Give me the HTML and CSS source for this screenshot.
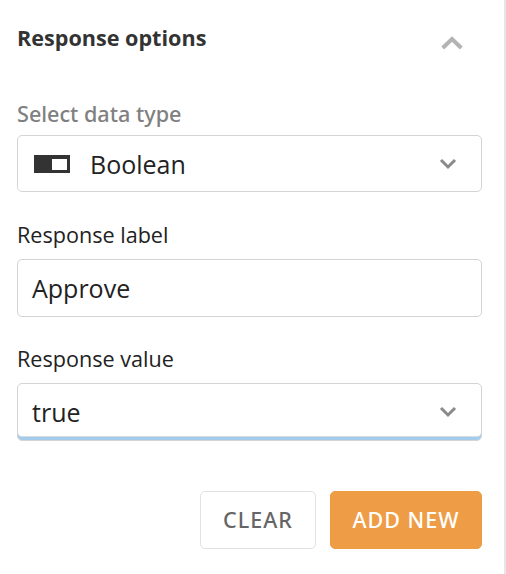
FILE: index.html
```html
<!DOCTYPE html>
<html lang="en">
<head>
<meta charset="utf-8">
<title>Response options</title>
<link rel="stylesheet" href="styles.css">
</head>
<body>
<main class="panel">
  <header class="panel-head">
    <h1 class="title">Response options</h1>
    <svg class="collapse" width="22" height="14" viewBox="0 0 22 14"><path d="M1.7 12 11 3l9.3 9" fill="none" stroke="#b3b3b3" stroke-width="4"/></svg>
  </header>
  <label class="label label-muted">Select data type</label>
  <div class="field">
    <svg class="toggle" width="36" height="18" viewBox="0 0 36 18"><path fill="#333" fill-rule="evenodd" d="M0 0h36v18H0zM18 4v11h15V4z"/></svg>
    <span class="value">Boolean</span>
    <svg class="chevron" width="18" height="12" viewBox="0 0 18 12"><path d="m2 2 7 7 7-7" fill="none" stroke="#8a8a8a" stroke-width="3"/></svg>
  </div>
  <label class="label">Response label</label>
  <div class="field field-input"><span class="value">Approve</span></div>
  <label class="label">Response value</label>
  <div class="field field-active">
    <span class="value">true</span>
    <svg class="chevron" width="18" height="12" viewBox="0 0 18 12"><path d="m2 2 7 7 7-7" fill="none" stroke="#8a8a8a" stroke-width="3"/></svg>
  </div>
  <footer class="actions">
    <button class="btn btn-clear">CLEAR</button>
    <button class="btn btn-add">ADD NEW</button>
  </footer>
</main>
</body>
</html>
```
FILE: styles.css
```css
* { box-sizing: border-box; }
body { margin: 0; background: #fff; font-family: "Open Sans", sans-serif; color: #222; }
.panel { width: 506px; height: 574px; padding: 22px 22px 0 17px; border-right: 2px solid #e6e6e6; overflow: hidden; }
.panel-head { display: flex; justify-content: space-between; height: 76px; }
.title { margin: 0; font-size: 21.6px; line-height: 31px; font-weight: 700; color: #333; }
.collapse { margin: 14px 19px 0 0; }
.label { display: block; height: 41px; line-height: 34px; font-size: 21.6px; }
.label-muted { height: 37px; line-height: 31px; color: #808080; font-family: "Noto Sans", sans-serif; font-weight: 500; }
.field { display: flex; align-items: center; width: 465px; height: 57px; margin-bottom: 26px; padding: 0 24px 0 14px; border: 1px solid #d4d4d4; border-radius: 5px; }
.field-input { height: 58px; margin-bottom: 25px; }
.value { font-size: 25px; line-height: 34px; }
.toggle { margin: 0 19px 0 2px; }
.toggle + .value { margin-left: 1px; }
.chevron { margin-left: auto; }
.field-active { height: 58px; padding-bottom: 1px; margin-bottom: 0; box-shadow: inset 0 -3px 0 #a3cbec, inset 0 -4px 0 #d4dbe1; }
.actions { display: flex; justify-content: flex-end; gap: 14px; margin-top: 50px; }
.btn { height: 58px; padding: 0 0 2px; border: 1px solid #e2e2e2; border-radius: 5px; background: #fff; font: 500 21.5px "Noto Sans", sans-serif; letter-spacing: 1px; }
.btn-clear { width: 116px; color: #666; }
.btn-add { width: 152px; background: #ee9d46; border-color: #ee9d46; color: #fff; }
```
